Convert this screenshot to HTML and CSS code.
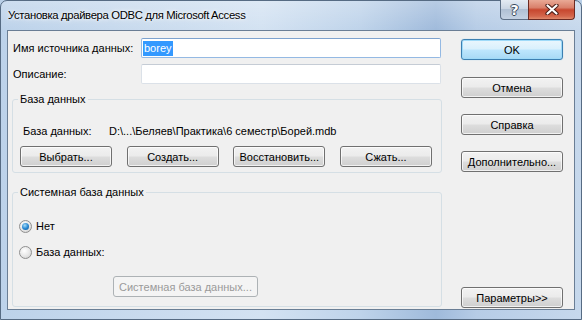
FILE: index.html
```html
<!DOCTYPE html>
<html lang="ru">
<head>
    <meta charset="UTF-8">
    <title>Установка драйвера ODBC для Microsoft Access</title>
    <link rel="stylesheet" href="styles.css">
</head>
<body>
    <div class="window">
        <div class="titlebar">
            <span class="title">Установка драйвера ODBC для Microsoft Access</span>
            <div class="caption-buttons">
                <span class="cap-btn help">?</span>
                <span class="cap-btn close">
                    <svg width="14" height="11" viewBox="0 0 14 11">
                        <path d="M2.5 1.5 L11.5 9.5 M11.5 1.5 L2.5 9.5" stroke="#4a1d17" stroke-width="4.2" stroke-linecap="round"/>
                        <path d="M2.5 1.5 L11.5 9.5 M11.5 1.5 L2.5 9.5" stroke="#ffffff" stroke-width="2.2" stroke-linecap="round"/>
                    </svg>
                </span>
            </div>
        </div>
        <div class="client">
            <div class="main">
                <div class="field-row">
                    <label class="field-label">Имя источника данных:</label>
                    <div class="input focused"><span class="selection">borey</span></div>
                </div>
                <div class="field-row">
                    <label class="field-label">Описание:</label>
                    <div class="input"></div>
                </div>

                <fieldset class="group db-group">
                    <legend>База данных</legend>
                    <div class="db-path">
                        <span class="db-label">База данных:</span>
                        <span>D:\...\Беляев\Практика\6 семестр\Борей.mdb</span>
                    </div>
                    <div class="db-buttons">
                        <button>Выбрать...</button>
                        <button>Создать...</button>
                        <button>Восстановить...</button>
                        <button>Сжать...</button>
                    </div>
                </fieldset>

                <fieldset class="group sys-group">
                    <legend>Системная база данных</legend>
                    <label class="radio-row"><span class="radio checked"></span>Нет</label>
                    <label class="radio-row"><span class="radio"></span>База данных:</label>
                    <button class="sys-button" disabled>Системная база данных...</button>
                </fieldset>
            </div>

            <div class="side">
                <button class="default">OK</button>
                <button class="cancel">Отмена</button>
                <button>Справка</button>
                <button>Дополнительно...</button>
                <button class="options">Параметры&gt;&gt;</button>
            </div>
        </div>
    </div>
</body>
</html>
```

FILE: styles.css
```css
* {
    box-sizing: border-box;
}

html, body {
    margin: 0;
    height: 100%;
    overflow: hidden;
}

body {
    font-family: "Liberation Sans", Arial, sans-serif;
    font-size: 11px;
    color: #000;
    background: #b9cfe7;
}

.window {
    width: 582px;
    height: 320px;
    display: flex;
    flex-direction: column;
    border: 1px solid #566b83;
    border-radius: 7px 7px 0 0;
    background:
        linear-gradient(180deg, rgba(255, 255, 255, 0.25) 0, rgba(255, 255, 255, 0) 30px),
        linear-gradient(90deg, #bcd2ea 0%, #c9dbee 25%, #d3e2f2 45%, #bed3ea 62%, #9fbadb 75%, #b6cce6 82%, #c6d8ec 100%);
}

/* title bar */

.titlebar {
    height: 29px;
    display: flex;
    justify-content: space-between;
    align-items: flex-start;
}

.title {
    font-size: 11.3px;
    letter-spacing: -0.35px;
    padding: 8px 0 0 7px;
    text-shadow: 0 0 6px rgba(255, 255, 255, 0.9), 0 0 3px #fff;
}

.caption-buttons {
    display: flex;
    margin-right: 6px;
    margin-top: -1px;
}

.cap-btn {
    height: 20px;
    display: flex;
    align-items: center;
    justify-content: center;
    border: 1px solid #5d6f86;
    border-top: none;
}

.help {
    width: 28px;
    border-right: none;
    border-radius: 0 0 0 4px;
    background: linear-gradient(180deg, #e4ebf3 0%, #cbd6e4 45%, #b0c0d4 50%, #c4d2e3 100%);
    color: #fff;
    font-weight: bold;
    font-size: 14px;
    font-family: "DejaVu Sans", sans-serif;
    text-shadow: 1px 0 0 #3b4a5c, -1px 0 0 #3b4a5c, 0 1px 0 #3b4a5c, 0 -1px 0 #3b4a5c;
}

.close {
    width: 47px;
    border-color: #6b2a22;
    border-radius: 0 0 4px 0;
    background: linear-gradient(180deg, #e9a996 0%, #d9806b 40%, #c7472f 52%, #d3654b 85%, #e08a6c 100%);
}

/* client area */

.client {
    flex: 1;
    margin: 0 6px 9px 6px;
    border: 1px solid #6a7e95;
    background: #f0f0f0;
    display: flex;
    gap: 19px;
    padding: 7px 11px 2px 4px;
}

.main {
    width: 430px;
    display: flex;
    flex-direction: column;
}

.field-row {
    display: flex;
    align-items: center;
    height: 20px;
    margin-bottom: 6px;
}

.field-label {
    width: 129px;
    padding-left: 1px;
}

.input {
    width: 300px;
    height: 20px;
    background: #fff;
    border: 1px solid #dbe1e8;
    border-top-color: #c5ccd5;
    border-radius: 2px;
    padding: 1px 1px;
    display: flex;
    align-items: center;
}

.input.focused {
    border-color: #94b9e3;
    border-top-color: #7da2ce;
}

.selection {
    background: #3399ff;
    color: #fff;
    line-height: 15px;
    padding: 0 1px;
}

/* group boxes */

.group {
    margin: 0;
    border: 1px solid #d5dfe5;
    border-radius: 3px;
    padding: 0 9px 0 7px;
    min-width: 0;
}

.group legend {
    padding: 0 2px;
    margin-left: -2px;
    line-height: 13px;
}

.db-group {
    margin-top: 3px;
    padding-top: 19px;
    padding-bottom: 5px;
}

.db-path {
    display: flex;
    line-height: 13px;
}

.db-label {
    width: 89px;
    padding-left: 3px;
}

.db-buttons {
    display: flex;
    justify-content: space-between;
    margin-top: 8px;
}

.db-buttons button {
    width: 92px;
}

.sys-group {
    flex: 1;
    margin-top: 13px;
    padding-top: 21px;
    display: flex;
    flex-direction: column;
}

.radio-row {
    display: flex;
    align-items: center;
    gap: 4px;
    line-height: 13px;
    margin-left: -1px;
    margin-bottom: 13px;
}

.radio {
    width: 13px;
    height: 13px;
    border-radius: 50%;
    border: 1px solid #8f8f8f;
    background: radial-gradient(circle at 40% 35%, #ffffff 0%, #e6e6e6 55%, #c9c9c9 100%);
    display: flex;
    align-items: center;
    justify-content: center;
}

.radio.checked::after {
    content: "";
    width: 7px;
    height: 7px;
    border-radius: 50%;
    background: radial-gradient(circle at 40% 35%, #a8dcf7 0%, #2a8ad4 50%, #0c4f8c 100%);
}

.sys-button {
    width: 145px;
    margin-left: 93px;
    margin-top: 4px;
}

/* buttons */

button {
    height: 21px;
    font-family: "Liberation Sans", Arial, sans-serif;
    font-size: 11px;
    color: #000;
    padding: 0;
    border: 1px solid #707070;
    border-radius: 3px;
    background: linear-gradient(180deg, #f2f2f2 0%, #ebebeb 48%, #dddddd 52%, #cfcfcf 100%);
    box-shadow: inset 0 0 0 1px rgba(255, 255, 255, 0.7);
}

button:disabled {
    color: #9a9a9a;
    border-color: #adb2b5;
    background: #f4f4f4;
    box-shadow: none;
}

.side {
    width: 102px;
    display: flex;
    flex-direction: column;
    gap: 16px;
    padding-top: 1px;
}

.side .default {
    border-color: #3c7fb1;
    background: linear-gradient(180deg, #eaf6fd 0%, #d9f0fc 48%, #bee6fd 52%, #a7d9f5 100%);
    box-shadow: inset 0 0 0 1px #9fdaf8, 0 0 1px #7fc2ec;
}

.side .cancel {
    margin-top: 1px;
}

.side .options {
    margin-top: auto;
    margin-bottom: -1px;
}
```
